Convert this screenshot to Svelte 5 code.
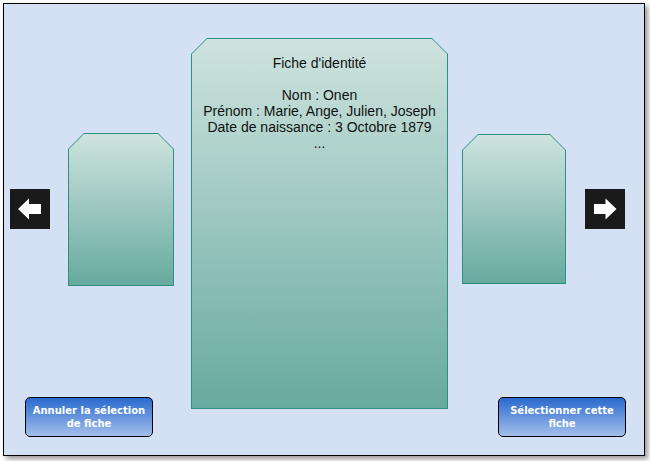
<script>
  const sheet = {
    title: "Fiche d'identité",
    lines: [
      'Nom : Onen',
      'Prénom : Marie, Ange, Julien, Joseph',
      'Date de naissance : 3 Octobre 1879',
      '...'
    ]
  };
</script>

<main class="window">
  <section class="carousel" aria-label="Fiches">
    <button class="arrow" type="button" aria-label="Fiche précédente">
      <svg viewBox="0 0 40 40" aria-hidden="true"><path d="M8 20 19 9.5V15H31V25H19V30.5Z" /></svg>
    </button>
    <div class="card previous"></div>
    <article class="card current">
      <h1>{sheet.title}</h1>
      {#each sheet.lines as line}
        <p>{line}</p>
      {/each}
    </article>
    <div class="card next"></div>
    <button class="arrow" type="button" aria-label="Fiche suivante">
      <svg viewBox="0 0 40 40" aria-hidden="true"><path d="M31.5 20 20.5 9.5V15H9V25H20.5V30.5Z" /></svg>
    </button>
  </section>

  <footer class="actions">
    <button class="action" type="button">Annuler la sélection de fiche</button>
    <button class="action" type="button">Sélectionner cette fiche</button>
  </footer>
</main>

<style>
  :global(body) {
    background: #fff;
  }

  .window {
    display: grid;
    margin: 3px 5px 5px 3px;
    border: 1px solid #000;
    background: #d4e0f4;
    box-shadow: 3px 3px 5px rgba(60, 50, 50, 0.5);
    font-family: "Liberation Sans", Arial, sans-serif;
    color: #111;
  }

  .carousel {
    grid-area: 1 / 1;
    display: grid;
    grid-template-columns: 40px 113fr 257fr 109fr 40px;
    gap: 14px;
    align-items: center;
    padding: 34px 19px 46px 6px;
  }

  .arrow {
    width: 40px;
    height: 40px;
    margin: 0 0 29px;
    padding: 0;
    border: 0;
    background: #1a1a1a;
    cursor: pointer;
  }

  .arrow svg {
    display: block;
    width: 40px;
    height: 40px;
    fill: #fff;
  }

  .card {
    --cut: 16px;
    position: relative;
    isolation: isolate;
    box-sizing: border-box;
    background: #2f8f80;
    clip-path: polygon(0 var(--cut), var(--cut) 0, calc(100% - var(--cut)) 0, 100% var(--cut), 100% 100%, 0 100%);
  }

  .card::before {
    --inner: 15px;
    content: '';
    position: absolute;
    z-index: -1;
    inset: 1px;
    background: linear-gradient(#cee3df, #67aa9e);
    clip-path: polygon(0 var(--inner), var(--inner) 0, calc(100% - var(--inner)) 0, 100% var(--inner), 100% 100%, 0 100%);
  }

  .previous {
    height: 153px;
    margin: 0 3px 28px 4px;
  }

  .next {
    height: 150px;
    margin: 0 5px 29px 0;
  }

  .current {
    min-height: 371px;
    padding-top: 17px;
    font-size: 14px;
    line-height: 16px;
    text-align: center;
  }

  h1 {
    margin: 0 0 16px;
    font-size: 14px;
    font-weight: 400;
    line-height: 16px;
  }

  p {
    margin: 0;
  }

  .actions {
    grid-area: 1 / 1;
    align-self: end;
    display: flex;
    justify-content: space-between;
    padding: 0 18px 18px 21px;
    pointer-events: none;
  }

  .action {
    width: 128px;
    height: 40px;
    padding: 0 6px;
    border: 1px solid #000;
    border-radius: 5px;
    background: linear-gradient(#2a6ace, #a4bfec);
    color: #fff;
    font: 700 10px/13px "DejaVu Sans", Verdana, sans-serif;
    pointer-events: auto;
    cursor: pointer;
  }
</style>
